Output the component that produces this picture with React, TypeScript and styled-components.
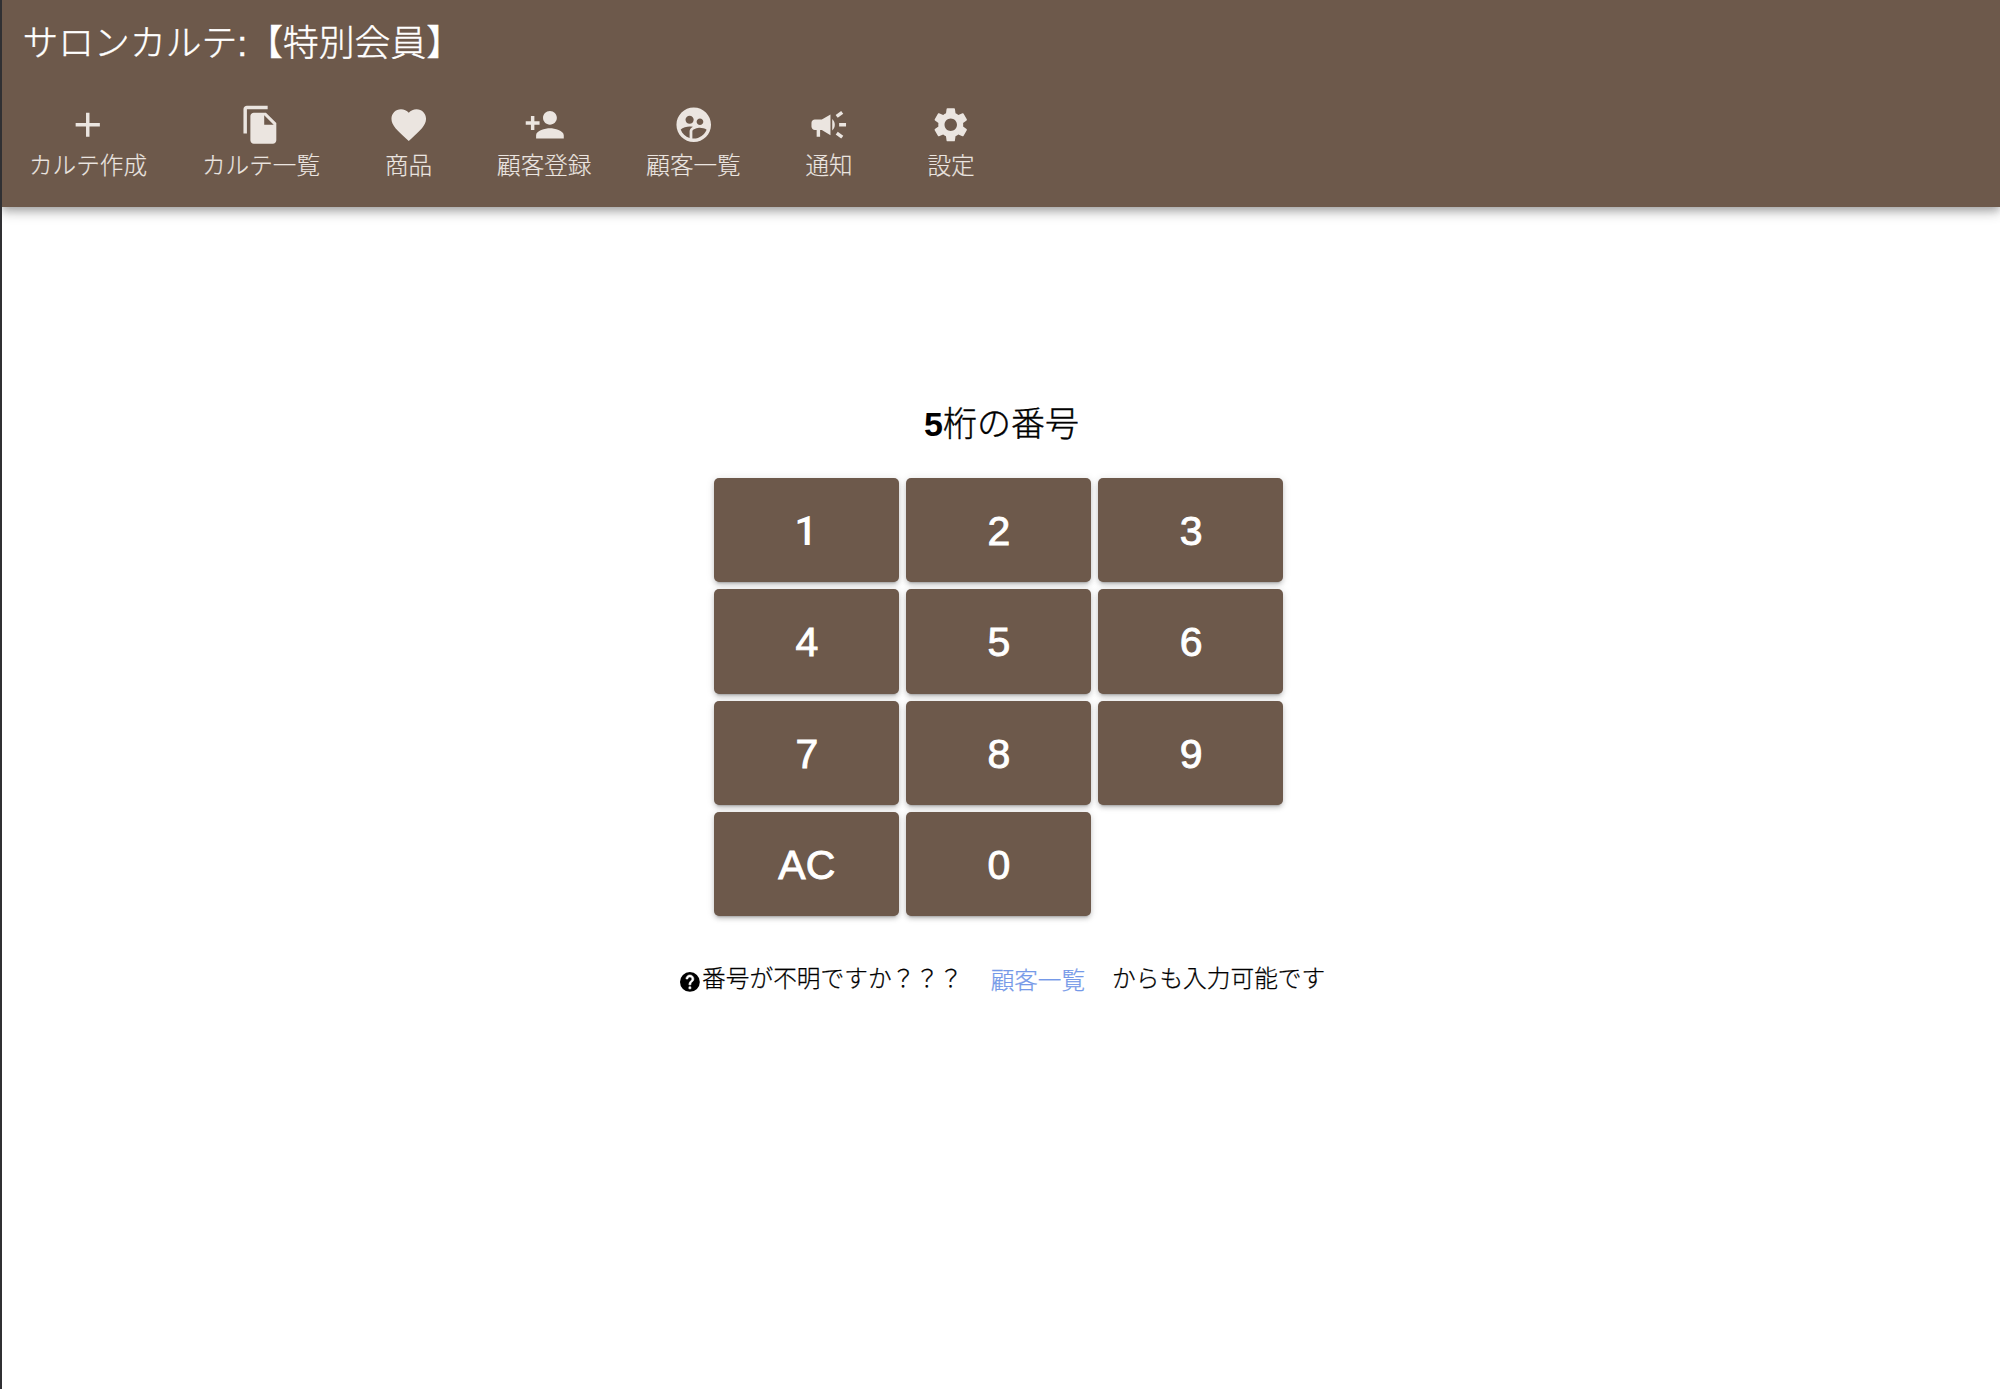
import React from 'react';
import styled, { createGlobalStyle } from 'styled-components';
import type { IconType } from 'react-icons';
import {
  MdAdd,
  MdFileCopy,
  MdFavorite,
  MdPersonAdd,
  MdSupervisedUserCircle,
  MdCampaign,
  MdSettings,
} from 'react-icons/md';

const brown = '#6d594b';
const fontStack = '"Liberation Sans", "Noto Sans CJK JP", sans-serif';

const GlobalStyle = createGlobalStyle`
  *, *::before, *::after { box-sizing: border-box; }
  body {
    margin: 0;
    background: #fff;
    color: #000;
    font-family: ${fontStack};
    font-weight: 300;
  }
`;

const Page = styled.div`
  height: 1389px;
  display: flex;
  flex-direction: column;
  border-left: 2px solid #303033;
  overflow: hidden;
`;

const Header = styled.header`
  height: 206.5px;
  flex: none;
  background: ${brown};
  color: #fff;
  box-shadow: 0 3px 7px -1px rgba(0, 0, 0, 0.2), 0 7px 9px rgba(0, 0, 0, 0.14),
    0 2px 17px rgba(0, 0, 0, 0.12);
`;

const Title = styled.h1`
  margin: 0;
  height: 84px;
  padding: 2px 0 0 20.5px;
  font-size: 35.8px;
  font-weight: 300;
  line-height: 84px;
  white-space: nowrap;
  -webkit-text-stroke: 0.4px currentColor;
`;

const Nav = styled.nav`
  display: flex;
  margin-left: -0.5px;
`;

const NavItem = styled.button<{ $width: number }>`
  width: ${(p) => p.$width}px;
  height: 97px;
  padding: 20px 0 0;
  border: 0;
  background: none;
  display: flex;
  flex-direction: column;
  align-items: center;
  color: #ebe5e0;
  font: 300 23.6px/40px ${fontStack};
  -webkit-text-stroke: 0.15px currentColor;
  white-space: nowrap;
  cursor: pointer;

  svg {
    width: 41.5px;
    height: 41.5px;
    flex: none;
  }
`;

const Main = styled.main`
  flex: 1;
  display: flex;
  flex-direction: column;
  align-items: center;
  padding-top: 192px;
`;

const Heading = styled.h2`
  margin: 0 0 29.3px 1px;
  height: 50px;
  font-size: 34px;
  font-weight: 300;
  line-height: 50px;
  -webkit-text-stroke: 0.4px currentColor;
`;

const HeadingDigit = styled.span`
  font-weight: 700;
  -webkit-text-stroke: 0;
`;

const Keypad = styled.div`
  display: grid;
  grid-template-columns: repeat(3, 185.3px);
  grid-auto-rows: 104.5px;
  gap: 6.9px;
  margin-right: 5px;
`;

const Key = styled.button<{ $plainOne?: boolean }>`
  border: 0;
  border-radius: 5px;
  background: ${brown};
  color: #fff;
  font: 400 41px/1 ${fontStack};
  -webkit-text-stroke: 0.9px #fff;
  padding: 3px 0 0 1px;
  cursor: pointer;
  box-shadow: 0 4px 2px -3px rgba(0, 0, 0, 0.2), 0 3px 4px rgba(0, 0, 0, 0.14),
    0 1px 8px rgba(0, 0, 0, 0.12);
  ${(p) =>
    p.$plainOne &&
    'font-family: Roboto, sans-serif; font-weight: 500; -webkit-text-stroke: 0; padding-right: 2px;'}
`;

const Hint = styled.p`
  display: flex;
  align-items: center;
  margin: 40px 0 0 1px;
  font-size: 23.7px;
  line-height: 40px;
  white-space: nowrap;
  -webkit-text-stroke: 0.25px currentColor;
`;

const HelpIcon = styled.svg`
  width: 23.8px;
  height: 23.8px;
  margin: 5px 0.5px 0 0;
`;

const HintLink = styled.a`
  margin: 5px 27px 0 28px;
  font-size: 23.6px;
  color: #7599e8;
  text-decoration: none;
`;

const navItems: { label: string; icon: IconType; width: number }[] = [
  { label: 'カルテ作成', icon: MdAdd, width: 173 },
  { label: 'カルテ一覧', icon: MdFileCopy, width: 173 },
  { label: '商品', icon: MdFavorite, width: 122 },
  { label: '顧客登録', icon: MdPersonAdd, width: 149.5 },
  { label: '顧客一覧', icon: MdSupervisedUserCircle, width: 149 },
  { label: '通知', icon: MdCampaign, width: 122 },
  { label: '設定', icon: MdSettings, width: 122 },
];

const keys = ['1', '2', '3', '4', '5', '6', '7', '8', '9', 'AC', '0'];

export default function App() {
  return (
    <Page lang="ja">
      <GlobalStyle />
      <Header>
        <Title>サロンカルテ:【特別会員】</Title>
        <Nav>
          {navItems.map(({ label, icon: Icon, width }) => (
            <NavItem key={label} $width={width}>
              <Icon />
              {label}
            </NavItem>
          ))}
        </Nav>
      </Header>
      <Main>
        <Heading>
          <HeadingDigit>5</HeadingDigit>桁の番号
        </Heading>
        <Keypad>
          {keys.map((k) => (
            <Key key={k} $plainOne={k === '1'}>
              {k}
            </Key>
          ))}
        </Keypad>
        <Hint>
          <HelpIcon viewBox="0 0 24 24" aria-hidden="true">
            <circle cx="12" cy="12" r="10" fill="#000" />
            <path
              fill="#fff"
              stroke="#fff"
              strokeWidth="0.6"
              d="M13 19h-2v-2h2v2zm2.07-7.75l-.9.92C13.45 12.9 13 13.5 13 15h-2v-.5c0-1.1.45-2.1 1.17-2.83l1.24-1.26c.37-.36.59-.86.59-1.41 0-1.1-.9-2-2-2s-2 .9-2 2H8c0-2.21 1.79-4 4-4s4 1.79 4 4c0 .88-.36 1.68-.93 2.25z"
            />
          </HelpIcon>
          <span>番号が不明ですか？？？</span>
          <HintLink>顧客一覧</HintLink>
          <span>からも入力可能です</span>
        </Hint>
      </Main>
    </Page>
  );
}
